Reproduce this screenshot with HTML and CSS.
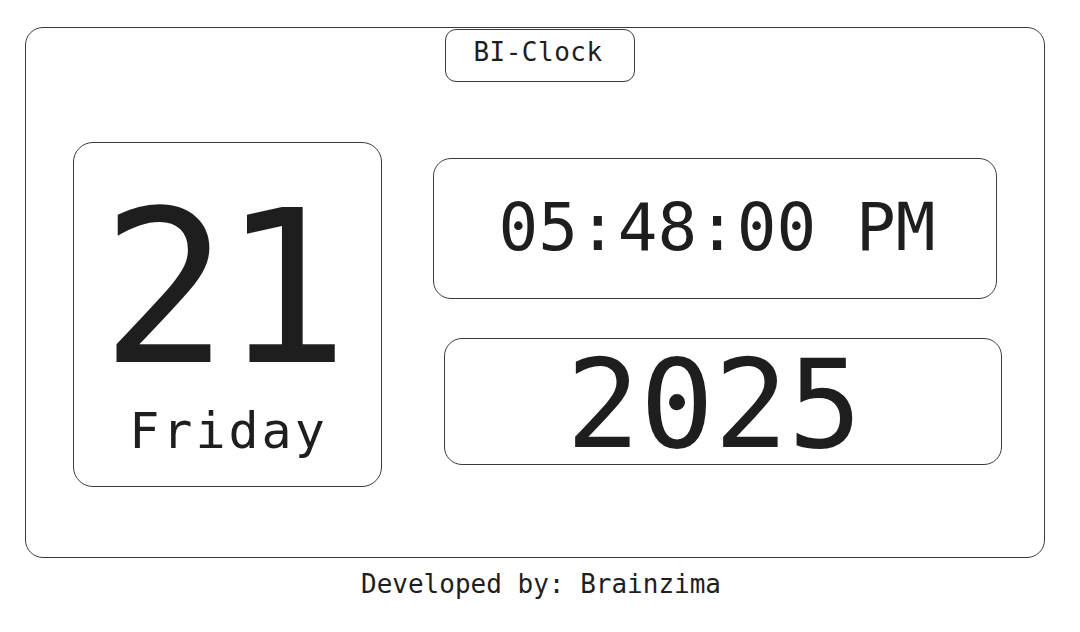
FILE: index.html
```html
<!DOCTYPE html>
<html lang="en">
<head>
<meta charset="utf-8">
<title>BI-Clock</title>
<link rel="stylesheet" href="styles.css">
</head>
<body>
  <div class="frame">
    <div class="title">BI-Clock</div>
    <div class="main">
      <div class="day-card">
        <div class="day-num">21</div>
        <div class="day-name">Friday</div>
      </div>
      <div class="right">
        <div class="time-box">05:48:00 PM</div>
        <div class="year-box">2025</div>
      </div>
    </div>
  </div>
  <div class="footer">Developed by: Brainzima</div>
</body>
</html>
```
FILE: styles.css
```css
html, body {
  margin: 0;
  padding: 0;
  background: #ffffff;
}
body {
  width: 1080px;
  height: 632px;
  font-family: "DejaVu Sans Mono", "Liberation Mono", monospace;
  color: #1e1e1e;
  overflow: hidden;
}
.frame {
  box-sizing: border-box;
  width: 1020px;
  height: 531px;
  margin: 27px 0 0 25px;
  border: 1.2px solid #3a3a3a;
  border-radius: 18px;
  display: flex;
  flex-direction: column;
}
.title {
  box-sizing: border-box;
  width: 190px;
  height: 53px;
  margin: 1px 0 0 419px;
  border: 1.2px solid #3a3a3a;
  border-radius: 11px;
  font-size: 26px;
  line-height: 26px;
  letter-spacing: 0.5px;
  text-align: center;
  padding-top: 9px;
  padding-right: 4px;
}
.main {
  display: flex;
  margin: 60px 0 0 47px;
}
.day-card {
  box-sizing: border-box;
  width: 309px;
  height: 345px;
  border: 1.2px solid #3a3a3a;
  border-radius: 20px;
  display: flex;
  flex-direction: column;
  align-items: center;
  padding-top: 61px;
}
.day-num {
  font-size: 212px;
  line-height: 170px;
  letter-spacing: -7px;
  padding-right: 12px;
}
.day-name {
  font-size: 50px;
  line-height: 50px;
  letter-spacing: 3px;
  margin-top: 32px;
  padding-left: 2px;
}
.right {
  display: flex;
  flex-direction: column;
  margin-left: 51px;
  margin-top: 16px;
}
.time-box {
  box-sizing: border-box;
  width: 564px;
  height: 141px;
  border: 1.2px solid #3a3a3a;
  border-radius: 18px;
  font-size: 66px;
  line-height: 66px;
  text-align: center;
  padding-top: 36px;
  padding-left: 4px;
}
.year-box {
  box-sizing: border-box;
  width: 558px;
  height: 127px;
  margin: 39px 0 0 11px;
  border: 1.2px solid #3a3a3a;
  border-radius: 18px;
  font-size: 123px;
  line-height: 123px;
  text-align: center;
  padding-top: 4px;
  padding-right: 18px;
}
.footer {
  margin-top: 11px;
  font-size: 26px;
  line-height: 30px;
  text-align: center;
  padding-left: 2px;
}
```
